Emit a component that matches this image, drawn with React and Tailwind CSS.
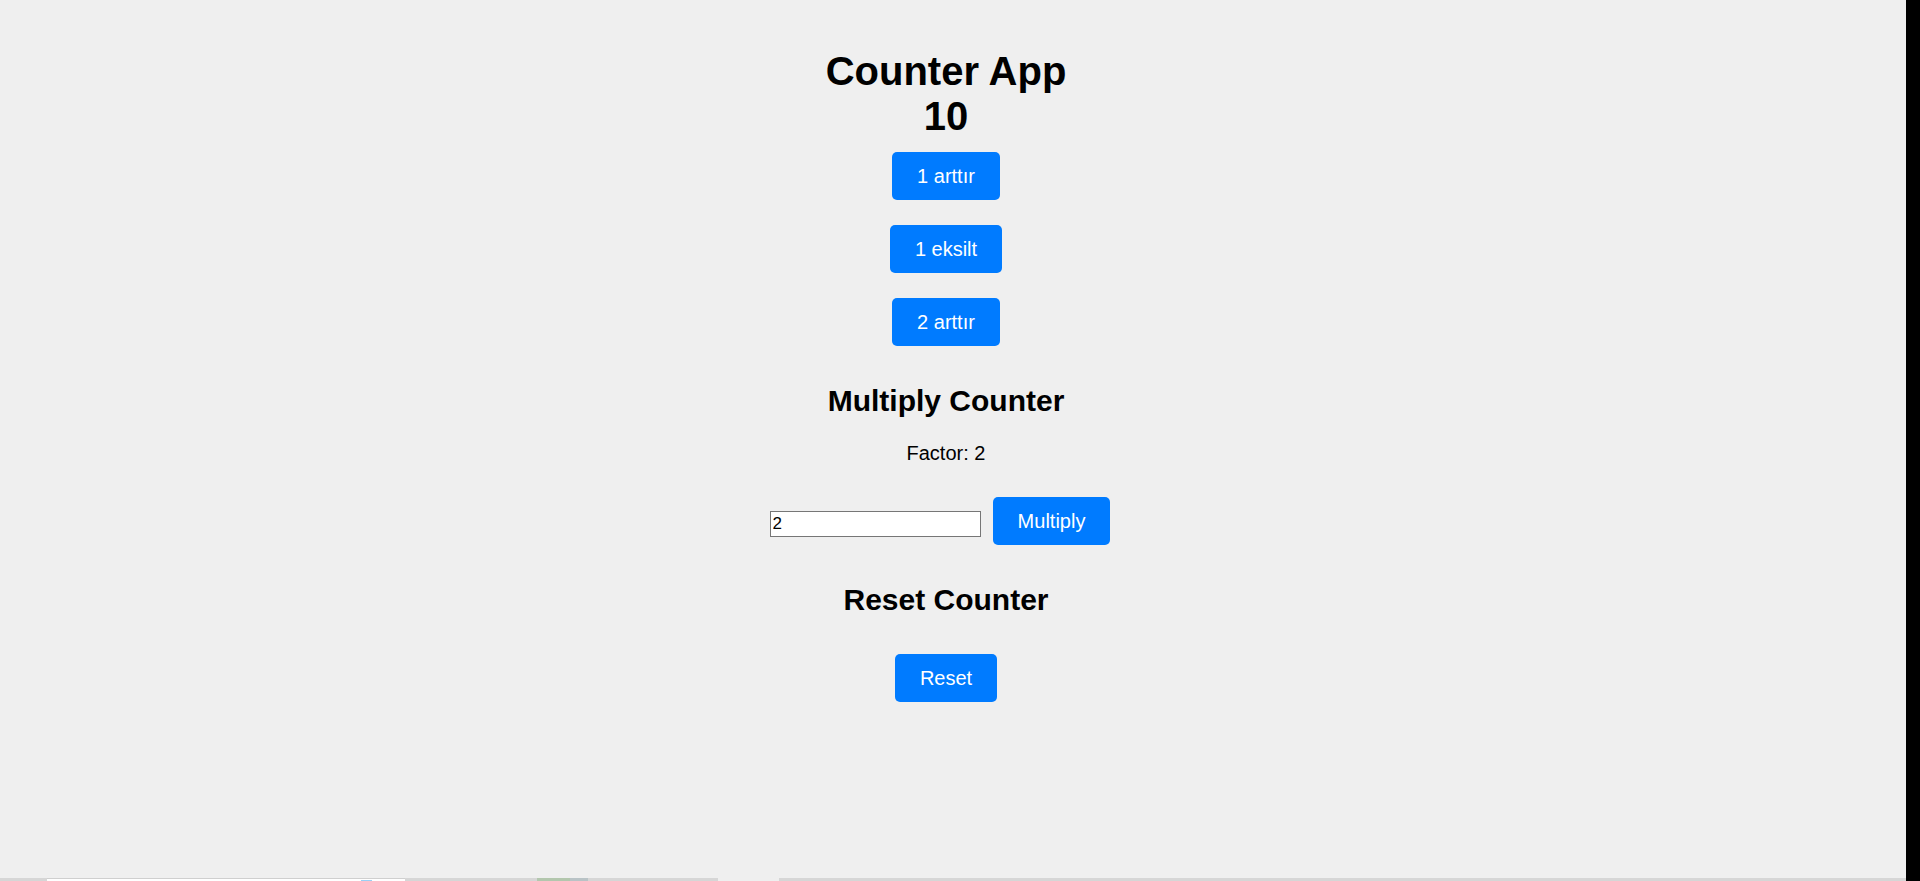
export default function App() {
  return (
    <div className="flex h-[881px] w-[1920px] overflow-hidden bg-[#efefef] font-['Liberation_Sans',Arial,sans-serif] text-black">
      <div className="flex flex-1 flex-col">
        <main className="flex flex-1 flex-col items-center pr-[14px] pt-[49px]">
          <h1 className="text-center text-[40px] font-bold leading-[45px]">
            Counter App
            <br />
            10
          </h1>

          <div className="mt-[13px] flex flex-col items-center gap-[25px]">
            <button className="h-[48px] rounded-[5px] bg-[#007bff] px-[25px] text-[20px] text-white">1 arttır</button>
            <button className="h-[48px] rounded-[5px] bg-[#007bff] px-[25px] text-[20px] text-white">1 eksilt</button>
            <button className="h-[48px] rounded-[5px] bg-[#007bff] px-[25px] text-[20px] text-white">2 arttır</button>
          </div>

          <h2 className="mt-[37px] text-[30px] font-bold leading-[35px]">Multiply Counter</h2>
          <p className="mt-[24px] text-[20px] leading-[23px]">Factor: 2</p>

          <div className="mt-[32px] flex items-center gap-[12px] pr-[12px]">
            <input
              type="number"
              defaultValue="2"
              className="mt-[5px] h-[26px] w-[211px] border border-[#767676] bg-white px-[2px] text-[17px] leading-[20px] [appearance:textfield]"
            />
            <button className="h-[48px] rounded-[5px] bg-[#007bff] px-[25px] text-[20px] text-white">Multiply</button>
          </div>

          <h2 className="mt-[37px] text-[30px] font-bold leading-[35px]">Reset Counter</h2>

          <button className="mt-[37px] h-[48px] rounded-[5px] bg-[#007bff] px-[25px] text-[20px] text-white">Reset</button>
        </main>

        {/* thin strip along the bottom edge */}
        <div className="flex h-[3px] w-full">
          <div className="w-[47px] bg-[#d6d6d6]" />
          <div className="relative w-[358px] border-t border-[#cfcfcf] bg-white">
            <div className="absolute left-[314px] top-[1px] h-[2px] w-[11px] bg-[#9ad0f5]" />
          </div>
          <div className="w-[132px] bg-[#d6d6d6]" />
          <div className="w-[33px] bg-[#b3c7ae]" />
          <div className="w-[18px] bg-[#b9c3c6]" />
          <div className="w-[130px] bg-[#d6d6d6]" />
          <div className="w-[61px] bg-[#efefef]" />
          <div className="flex-1 bg-[#d6d6d6]" />
        </div>
      </div>
      <div className="w-[14px] bg-black" />
    </div>
  );
}
